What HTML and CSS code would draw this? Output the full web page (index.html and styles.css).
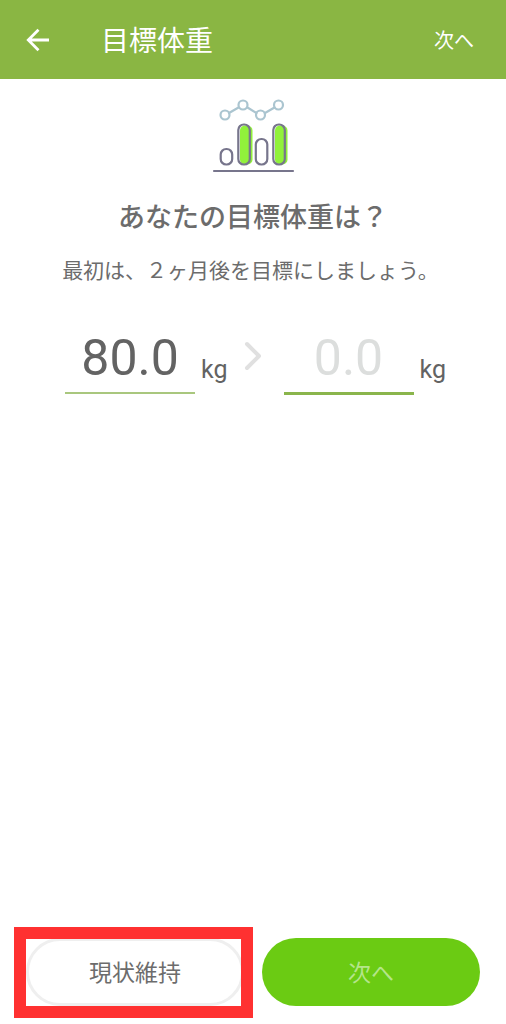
FILE: index.html
```html
<!DOCTYPE html>
<html lang="ja">
<head>
<meta charset="utf-8">
<meta name="viewport" content="width=device-width, initial-scale=1">
<title>目標体重</title>
<link rel="stylesheet" href="styles.css">
</head>
<body>
<div class="screen">
  <header class="appbar">
    <button class="back" type="button" aria-label="戻る">
      <svg width="24" height="24" viewBox="0 0 24 24" fill="none" stroke="currentColor" stroke-width="2.8"><path d="M23 12H2.500M12.500 1.700L2.300 12l10.200 10.300"/></svg>
    </button>
    <h1 class="title">目標体重</h1>
    <button class="skip" type="button">次へ</button>
  </header>
  <main class="content">
    <svg class="chart" width="84" height="76" viewBox="0 0 84 76" fill="none" stroke-linecap="round" aria-hidden="true">
      <g fill="#91f13b">
        <rect x="29" y="26.500" width="12.500" height="39" rx="5"/>
        <rect x="64" y="26.500" width="12.500" height="39" rx="5"/>
      </g>
      <g stroke="#77758c" stroke-width="2.200">
        <rect x="9.700" y="50" width="11.500" height="15.500" rx="5.500"/>
        <rect x="27.300" y="25.500" width="11.500" height="40" rx="5.500"/>
        <rect x="44.800" y="40" width="11.500" height="25.500" rx="5.500"/>
        <rect x="62.300" y="25.500" width="11.500" height="40" rx="5.500"/>
        <path d="M3 72h79"/>
      </g>
      <g stroke="#abc5d0" stroke-width="2.200">
        <path d="M18 14l9.500-5.500M36.500 8.500l9 5.500M54 14l9.500-5.500"/>
        <circle cx="14" cy="16" r="4.500"/>
        <circle cx="32" cy="6" r="4.500"/>
        <circle cx="49.500" cy="16" r="4.500"/>
        <circle cx="67.500" cy="6" r="4.500"/>
      </g>
    </svg>
    <h2 class="question">あなたの目標体重は？</h2>
    <p class="hint">最初は、２ヶ月後を目標にしましょう。</p>
    <form class="weights">
      <label class="field">
        <input class="value" type="text" inputmode="decimal" value="80.0" aria-label="現在の体重">
        <span class="unit">kg</span>
      </label>
      <svg class="chevron" width="18" height="30" viewBox="0 0 18 30" fill="none" stroke="#e0e0e0" stroke-width="4" stroke-linecap="round" stroke-linejoin="round" aria-hidden="true"><path d="M3 3l12 12L3 27"/></svg>
      <label class="field">
        <input class="value active" type="text" inputmode="decimal" placeholder="0.0" aria-label="目標体重">
        <span class="unit">kg</span>
      </label>
    </form>
  </main>
  <footer class="actions">
    <div class="marked">
      <button class="btn outline" type="button">現状維持</button>
    </div>
    <button class="btn primary" type="button">次へ</button>
  </footer>
</div>
</body>
</html>
```
FILE: styles.css
```css
* {
  box-sizing: border-box;
}

body {
  margin: 0;
  background: #fff;
  color: #6c6c6c;
  font-family: Roboto, "Noto Sans CJK JP", sans-serif;
}

button,
input {
  margin: 0;
  padding: 0;
  border: 0;
  background: none;
  color: inherit;
  font: inherit;
}

.screen {
  display: flex;
  flex-direction: column;
  min-height: 100vh;
}

.appbar {
  display: flex;
  align-items: center;
  height: 79px;
  padding: 0 32px 0 26px;
  background: #8ab643;
  color: #fff;
}

.back {
  display: flex;
}

.title {
  flex: 1;
  margin: 0 0 0 51px;
  padding-top: 4px;
  font-size: 28px;
  font-weight: 400;
  line-height: 40px;
}

.skip {
  padding-top: 2px;
  font-size: 20px;
  line-height: 28px;
}

.content {
  display: flex;
  flex: 1;
  flex-direction: column;
  align-items: center;
  padding-top: 20px;
}

.question {
  margin: 23px 0 0;
  font-size: 27px;
  font-weight: 500;
  line-height: 40px;
}

.hint {
  margin: 18px 0 0;
  padding-right: 5px;
  font-size: 21px;
  line-height: 30px;
}

.weights {
  display: flex;
  justify-content: center;
  margin-top: 39px;
  padding-left: 5px;
}

.field {
  display: flex;
  align-items: flex-start;
  gap: 6px;
}

.value {
  width: 130px;
  height: 69px;
  padding-bottom: 2px;
  border-bottom: 2px solid #a9c77e;
  border-radius: 0;
  color: #636363;
  font-size: 50px;
  text-align: center;
}

.value.active {
  height: 70px;
  border-bottom: 3px solid #8ab54c;
}

.value::placeholder {
  color: #dcdedd;
  opacity: 1;
}

.unit {
  margin-top: 29px;
  color: #636363;
  font-size: 25px;
  line-height: 32px;
}

.chevron {
  margin: 16px 22px 0 16px;
}

.actions {
  display: grid;
  grid-template-columns: 1fr 1fr;
  gap: 18px;
  padding: 0 26px 18px;
}

.marked {
  position: relative;
}

.marked::after {
  position: absolute;
  inset: -11px -9px -12px -12px;
  border: 12px solid #ff3131;
  content: "";
  pointer-events: none;
}

.btn {
  width: 100%;
  height: 68px;
  padding-top: 3px;
  border-radius: 34px;
  font-size: 23px;
  line-height: 32px;
}

.outline {
  border: 3px solid #efefef;
  background: #fff;
}

.primary {
  background: #6bcb13;
  color: #b5e58a;
}
```
